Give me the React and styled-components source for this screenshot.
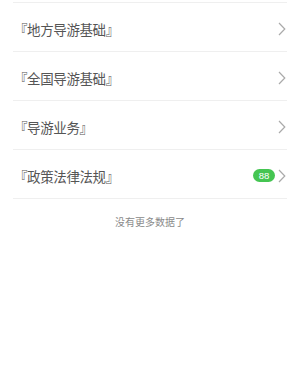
import React from 'react';
import styled, { createGlobalStyle } from 'styled-components';

const GlobalStyle = createGlobalStyle`
  html, body {
    margin: 0;
    padding: 0;
    background: #fff;
  }
  body {
    font-family: "Noto Sans CJK SC", "Noto Sans", sans-serif;
  }
`;

const PageStyled = styled.div`
  width: 300px;
  height: 368px;
  background: #fff;
  padding-top: 2px;
  box-sizing: border-box;
`;

const ListStyled = styled.ul`
  list-style: none;
  margin: 0 13px;
  padding: 0;
  border-top: 1px solid #efefef;
`;

const RowStyled = styled.li`
  height: 48px;
  display: flex;
  align-items: center;
  border-bottom: 1px solid #efefef;
  padding: 0 1px 0 1px;
`;

const TitleStyled = styled.span`
  flex: 1;
  font-size: 13.5px;
  color: #555;
  padding-top: 3px;
  letter-spacing: -0.4px;
`;

const BadgeStyled = styled.span`
  height: 13px;
  min-width: 22px;
  padding: 0 3px;
  box-sizing: border-box;
  border-radius: 7px;
  background: #45c552;
  color: #fff;
  font-family: "Liberation Sans", Arial, sans-serif;
  font-size: 9.5px;
  line-height: 13px;
  text-align: center;
  margin-right: 3px;
  margin-top: 3px;
`;

const ChevronStyled = styled.svg`
  width: 8px;
  height: 14px;
  margin-top: 3px;
  flex-shrink: 0;
`;

const FooterStyled = styled.div`
  text-align: center;
  font-size: 10px;
  color: #8a8a8a;
  padding-top: 15px;
`;

const Chevron = () => (
  <ChevronStyled viewBox="0 0 8 14">
    <path d="M1 1 L6.8 7 L1 13" fill="none" stroke="#aaa" strokeWidth="1.2" />
  </ChevronStyled>
);

const items = [
  { title: '『地方导游基础』' },
  { title: '『全国导游基础』' },
  { title: '『导游业务』' },
  { title: '『政策法律法规』', badge: 88 },
];

const App = () => (
  <PageStyled>
    <GlobalStyle />
    <ListStyled>
      {items.map((item) => (
        <RowStyled key={item.title}>
          <TitleStyled>{item.title}</TitleStyled>
          {item.badge && <BadgeStyled>{item.badge}</BadgeStyled>}
          <Chevron />
        </RowStyled>
      ))}
    </ListStyled>
    <FooterStyled>没有更多数据了</FooterStyled>
  </PageStyled>
);

export default App;
